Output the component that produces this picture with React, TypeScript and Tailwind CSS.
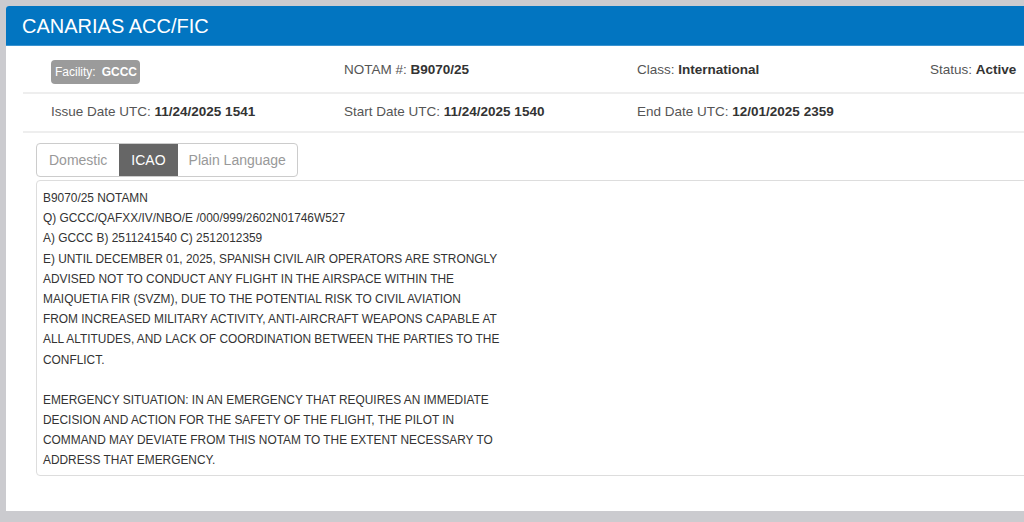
const fields = [
  [
    { label: "NOTAM #:", value: "B9070/25" },
    { label: "Class:", value: "International" },
    { label: "Status:", value: "Active" },
  ],
  [
    { label: "Issue Date UTC:", value: "11/24/2025 1541" },
    { label: "Start Date UTC:", value: "11/24/2025 1540" },
    { label: "End Date UTC:", value: "12/01/2025 2359" },
  ],
];

const notamLines = [
  "B9070/25 NOTAMN",
  "Q) GCCC/QAFXX/IV/NBO/E /000/999/2602N01746W527",
  "A) GCCC B) 2511241540 C) 2512012359",
  "E) UNTIL DECEMBER 01, 2025, SPANISH CIVIL AIR OPERATORS ARE STRONGLY",
  "ADVISED NOT TO CONDUCT ANY FLIGHT IN THE AIRSPACE WITHIN THE",
  "MAIQUETIA FIR (SVZM), DUE TO THE POTENTIAL RISK TO CIVIL AVIATION",
  "FROM INCREASED MILITARY ACTIVITY, ANTI-AIRCRAFT WEAPONS CAPABLE AT",
  "ALL ALTITUDES, AND LACK OF COORDINATION BETWEEN THE PARTIES TO THE",
  "CONFLICT.",
  "",
  "EMERGENCY SITUATION: IN AN EMERGENCY THAT REQUIRES AN IMMEDIATE",
  "DECISION AND ACTION FOR THE SAFETY OF THE FLIGHT, THE PILOT IN",
  "COMMAND MAY DEVIATE FROM THIS NOTAM TO THE EXTENT NECESSARY TO",
  "ADDRESS THAT EMERGENCY.",
];

function Field({ label, value }: { label: string; value: string }) {
  return (
    <div className="pl-[28px] text-[13.5px] text-[#555]">
      {label} <span className="font-bold text-[#333]">{value}</span>
    </div>
  );
}

export default function App() {
  return (
    <div
      className="h-[522px] w-[1024px] overflow-hidden bg-[#cbcbcf] pl-[6px] pt-[6px]"
      style={{ fontFamily: '"Liberation Sans", Arial, sans-serif' }}
    >
      <div className="h-[505px] w-[1100px] rounded-tl-[3px] bg-white">
        <div className="flex h-[40px] items-center rounded-tl-[3px] border-b border-[#3a93d0] bg-[#0275c1] pl-[16px] text-[20px] text-white">
          CANARIAS ACC/FIC
        </div>

        <div className="ml-[17px]">
          <div className="grid h-[48px] grid-cols-[293px_293px_293px_293px] items-center border-b-2 border-[#eee] pt-[2px]">
            <div className="pl-[28px]">
              <span className="inline-flex h-[24px] w-[89px] translate-y-[1px] items-center rounded-[4px] bg-[#9b9b9b] px-[4px] text-[12px] text-white">
                <span>Facility:</span>
                <span className="ml-[6px] font-bold">GCCC</span>
              </span>
            </div>
            {fields[0].map((f) => (
              <Field key={f.label} {...f} />
            ))}
          </div>
          <div className="grid h-[39px] grid-cols-[293px_293px_293px_293px] items-center border-b-2 border-[#eee]">
            {fields[1].map((f) => (
              <Field key={f.label} {...f} />
            ))}
          </div>
        </div>

        <div className="ml-[30px] mt-[10px]">
          <div className="inline-flex h-[34px] overflow-hidden rounded-[4px] border border-[#ccc] text-[14px] text-[#999]">
            <div className="flex items-center px-[12px]">Domestic</div>
            <div className="flex items-center bg-[#666] px-[12px] text-white">ICAO</div>
            <div className="flex items-center px-[11px]">Plain Language</div>
          </div>
          <div className="mt-[3px] h-[296px] rounded-[4px] border border-[#ddd] px-[6px] pt-[7px] text-[11.9px] leading-[20.2px] text-[#333]">
            {notamLines.map((line, i) => (
              <div key={i} className="h-[20.2px]">
                {line}
              </div>
            ))}
          </div>
        </div>
      </div>
    </div>
  );
}
